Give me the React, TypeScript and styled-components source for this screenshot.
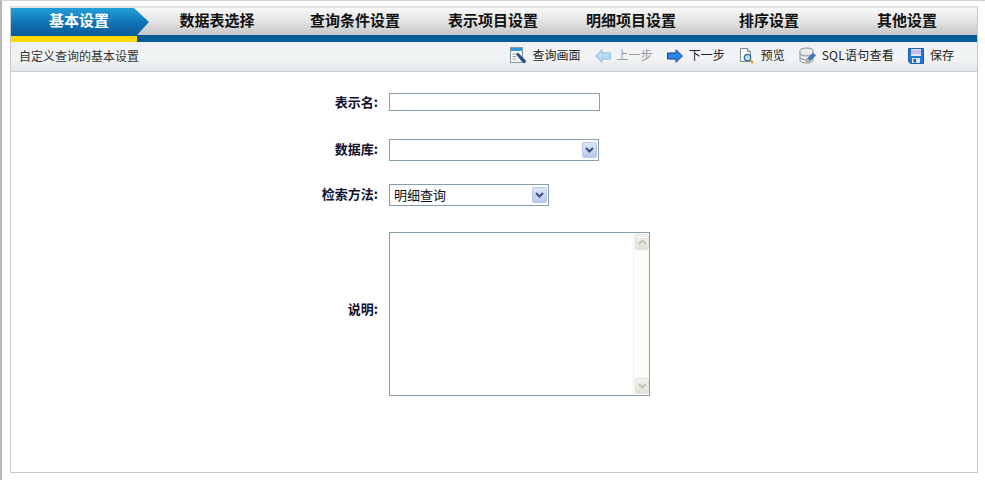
import React from "react";
import styled, { createGlobalStyle } from "styled-components";

const Global = createGlobalStyle`
  html, body { margin: 0; padding: 0; background: #fff; }
  body { font-family: "Noto Sans CJK SC", "Liberation Sans", sans-serif; font-size: 12px; color: #222; }
`;

const Page = styled.div`
  width: 985px; height: 480px; box-sizing: border-box; overflow: hidden;
  border-left: 2px solid #b4b8b8; border-top: 1px solid #d4d4d4; padding: 5px 7px 7px 8px;
`;
const Frame = styled.div`
  height: 100%; box-sizing: border-box; border: 1px solid #c8c8c8; border-top: 2px solid #e4e4e4;
  display: flex; flex-direction: column;
`;
const TabBar = styled.div`
  display: flex; height: 27px; flex: none;
  background: linear-gradient(#f8f8f8, #e6e6e6 45%, #c6c6c6);
`;
const Tab = styled.div<{ $active?: boolean }>`
  position: relative; width: 138px; flex: none; display: flex; align-items: center; justify-content: center;
  box-sizing: border-box; padding-bottom: 5px;
  font-weight: 700; font-size: 15px; color: ${p => (p.$active ? "#fff" : "#111")};
  background: ${p => (p.$active ? "linear-gradient(#22a0d8, #0f6fb0 60%, #0a5c9a)" : "transparent")};
  ${p => p.$active && "width: 123px; padding-left: 13px; margin-right: 14px;"}
`;
const TabArrow = styled.svg`
  position: absolute; left: 100%; top: 0; width: 15px; height: 27px; display: block;
`;
const Band = styled.div`
  display: flex; align-items: flex-end; height: 7px; flex: none; background: #045b97;
`;
const ActiveMark = styled.div`
  width: 126px; height: 6px; background: #ffd800;
`;
const SubBar = styled.div`
  height: 30px; box-sizing: border-box; flex: none; display: flex; align-items: center; justify-content: space-between;
  padding: 0 23px 0 8px; border-bottom: 1px solid #c9cccf;
  background: linear-gradient(#eef1f3, #f2f4f5 55%, #e4e8ea);
`;
const Hint = styled.span` font-size: 12px; color: #333; margin-top: -3px; `;
const Tools = styled.div` display: flex; align-items: center; margin-bottom: 2px; `;
const Tool = styled.div<{ $off?: boolean }>`
  display: flex; align-items: center; gap: 6px; margin-left: 14px; font-size: 12px;
  color: ${p => (p.$off ? "#999" : "#222")};
  svg { display: block; flex: none; }
  span { line-height: 17px; margin-bottom: 3px; }
`;
const SqlText = styled.span` letter-spacing: 0.25px; `;
const Form = styled.div`
  flex: 1; display: flex; flex-direction: column; padding-top: 21px;
`;
const Row = styled.div<{ $after?: number }>`
  display: flex; align-items: center; margin-bottom: ${p => p.$after ?? 0}px;
`;
const Label = styled.label<{ $lift?: number }>`
  width: 378px; flex: none; box-sizing: border-box; font-weight: 700; font-size: 13px; line-height: 16px; color: #101030;
  text-align: right; padding-right: 11px; margin-bottom: ${p => p.$lift ?? 2}px;
`;
const TextInput = styled.input`
  width: 211px; height: 18px; box-sizing: border-box; border: 1px solid #84a0ae; background: #fff; padding: 0 2px; outline: none;
`;
const Select = styled.div<{ $w: number }>`
  width: ${p => p.$w}px; height: 22px; box-sizing: border-box; border: 1px solid #84a0ae; background: #fff;
  display: flex; align-items: center; justify-content: space-between; padding: 1px; font-size: 13px; color: #111;
`;
const SelectText = styled.span` padding-left: 3px; margin-top: -1px; `;
const DropBtn = styled.div`
  width: 15px; height: 16px; box-sizing: border-box; border: 1px solid #b8c8e8; border-radius: 2px;
  background: linear-gradient(#dde6f8, #b8c9ec); display: flex; align-items: center; justify-content: center;
`;
const Memo = styled.div`
  width: 261px; height: 164px; box-sizing: border-box; border: 1px solid #84a0ae; background: #fff;
  display: flex; justify-content: flex-end;
`;
const ScrollTrack = styled.div`
  width: 16px; box-sizing: border-box; padding: 1px 0 1px 1px; background: #fbfbf8; border-left: 1px solid #f0f0ec;
  display: flex; flex-direction: column; justify-content: space-between;
`;
const ScrollBtn = styled.div`
  height: 16px; box-sizing: border-box; border: 1px solid #e4e4dc; border-radius: 2px;
  background: linear-gradient(#f4f4ee, #e2e2da); display: flex; align-items: center; justify-content: center;
`;

const Chevron = ({ up, color }: { up?: boolean; color: string }) => (
  <svg width="9" height="6" viewBox="0 0 9 6">
    <path d={up ? "M1 5L4.5 1.5L8 5" : "M1 1L4.5 4.5L8 1"} fill="none" stroke={color} strokeWidth="2" />
  </svg>
);

const QueryIcon = () => (
  <svg width="17" height="17" viewBox="0 0 17 17">
    <rect x="0.5" y="0.5" width="12" height="15" fill="#f4f6f6" stroke="#8a9aa4" />
    <rect x="1" y="1" width="11" height="3" fill="#2b9ad8" />
    <path d="M2.5 7H8M2.5 9.5H6M2.5 12H6" stroke="#9aa6ae" />
    <path d="M6.5 7.5L8 6L15.5 13.5L15 16L12.5 15Z" fill="#2a4f96" stroke="#1d3572" strokeWidth="0.6" />
  </svg>
);
const Arrow = ({ fill, stroke, left }: { fill: string; stroke: string; left?: boolean }) => (
  <svg width="16" height="14" viewBox="0 0 16 14">
    <path transform={left ? "matrix(-1 0 0 1 16 0)" : undefined} d="M0.5 4H9V0.8L15.5 7L9 13.2V10H0.5Z" fill={fill} stroke={stroke} />
  </svg>
);
const PreviewIcon = () => (
  <svg width="16" height="16" viewBox="0 0 16 16">
    <path d="M1.5 0.5H8.5L11.5 3.5V13.5H1.5Z" fill="#fff" stroke="#7b8a94" />
    <path d="M8.5 0.5V3.5H11.5" fill="#dfe6ea" stroke="#7b8a94" />
    <circle cx="8.5" cy="9.5" r="3.2" fill="#bfe0f4" stroke="#2a6ea8" strokeWidth="1.3" />
    <path d="M11 12L14 15" stroke="#c89a1e" strokeWidth="2.2" />
  </svg>
);
const SqlIcon = () => (
  <svg width="17" height="17" viewBox="0 0 17 17">
    <ellipse cx="7.5" cy="3.5" rx="6.5" ry="2.5" fill="#eceeee" stroke="#8b8f90" />
    <path d="M1 3.5V13.5C1 15 4 16 7.5 16S14 15 14 13.5V3.5" fill="#eaeaea" stroke="#8b8f90" />
    <path d="M1 7C3 9.5 12 9.5 14 7M1 10.5C3 13 8 13 10 12.5" fill="none" stroke="#8b8f90" />
    <path d="M7.5 15L8.5 11.5L14 6L16.5 8.5L11 14Z" fill="#3d7fc8" stroke="#245a9a" strokeWidth="0.6" />
    <path d="M7.5 15L8.5 11.5L11 14Z" fill="#f0c070" />
  </svg>
);
const SaveIcon = () => (
  <svg width="16" height="16" viewBox="0 0 16 16">
    <path d="M0.5 0.5H15.5V15.5H2.5L0.5 13.5Z" fill="#1f78d4" stroke="#1a5ea8" />
    <rect x="3" y="1" width="10" height="7" fill="#e8e4f4" />
    <path d="M3 3H13M3 5H13" stroke="#a498d8" />
    <rect x="4" y="10" width="8" height="5" fill="#dfe6ee" />
    <rect x="5.5" y="11" width="2.5" height="3.5" fill="#1f5aa0" />
  </svg>
);

const tabs = ["数据表选择", "查询条件设置", "表示项目设置", "明细项目设置", "排序设置", "其他设置"];

export default function App() {
  return (
    <Page>
      <Global />
      <Frame>
        <TabBar>
          <Tab $active>
            基本设置
            <TabArrow viewBox="0 0 15 27">
              <defs>
                <linearGradient id="tabArrow" x1="0" y1="0" x2="0" y2="1">
                  <stop offset="0" stopColor="#22a0d8" />
                  <stop offset="0.6" stopColor="#0f6fb0" />
                  <stop offset="1" stopColor="#0a5c9a" />
                </linearGradient>
              </defs>
              <path d="M0 0L15 14L3 27H0Z" fill="url(#tabArrow)" />
            </TabArrow>
          </Tab>
          {tabs.map(t => <Tab key={t}>{t}</Tab>)}
        </TabBar>
        <Band><ActiveMark /></Band>
        <SubBar>
          <Hint>自定义查询的基本设置</Hint>
          <Tools>
            <Tool><QueryIcon /><span>查询画面</span></Tool>
            <Tool $off><Arrow left fill="#b4dcf4" stroke="#8fb8d4" /><span>上一步</span></Tool>
            <Tool><Arrow fill="#2e86ea" stroke="#12408e" /><span>下一步</span></Tool>
            <Tool><PreviewIcon /><span>预览</span></Tool>
            <Tool><SqlIcon /><SqlText>SQL语句查看</SqlText></Tool>
            <Tool><SaveIcon /><span>保存</span></Tool>
          </Tools>
        </SubBar>
        <Form>
          <Row $after={28}><Label $lift={0}>表示名:</Label><TextInput /></Row>
          <Row $after={23}>
            <Label>数据库:</Label>
            <Select $w={210}><span /><DropBtn><Chevron color="#3b4f80" /></DropBtn></Select>
          </Row>
          <Row $after={26}>
            <Label>检索方法:</Label>
            <Select $w={160}><SelectText>明细查询</SelectText><DropBtn><Chevron color="#3b4f80" /></DropBtn></Select>
          </Row>
          <Row>
            <Label $lift={10}>说明:</Label>
            <Memo>
              <ScrollTrack>
                <ScrollBtn><Chevron up color="#c4c4bc" /></ScrollBtn>
                <ScrollBtn><Chevron color="#c4c4bc" /></ScrollBtn>
              </ScrollTrack>
            </Memo>
          </Row>
        </Form>
      </Frame>
    </Page>
  );
}
